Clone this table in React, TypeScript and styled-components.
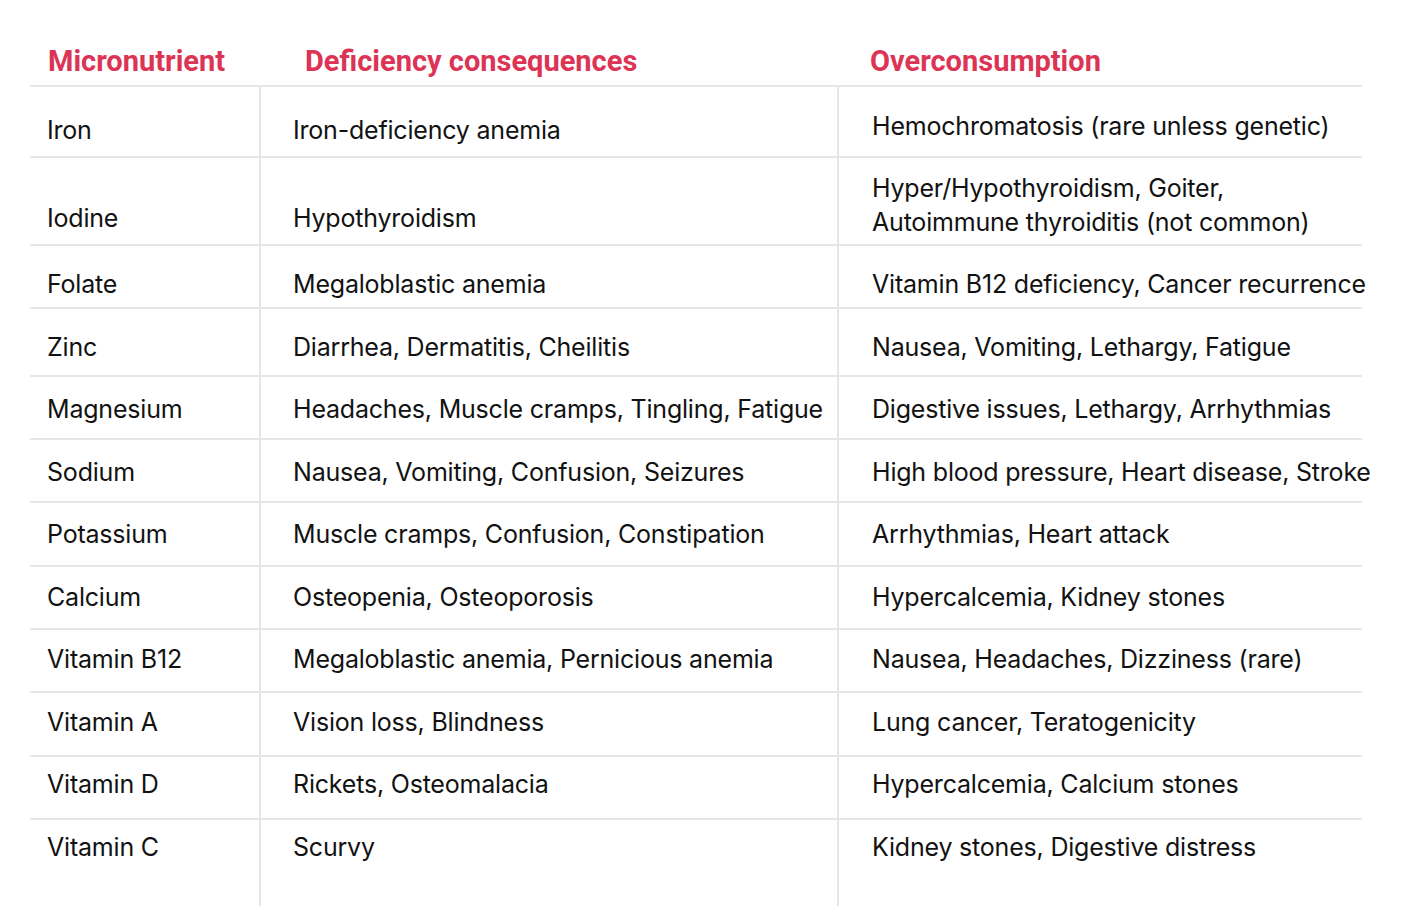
import React from "react";
import styled, { createGlobalStyle } from "styled-components";

const Global = createGlobalStyle`
  html, body { margin: 0; padding: 0; background: #ffffff; }
  body { font-family: "Inter", "Liberation Sans", sans-serif; }
`;

const LINE = "#e6e6e6";

const Page = styled.div`
  padding-left: 30px;
  width: 1332px;
`;

const HeaderRow = styled.div`
  display: grid;
  grid-template-columns: 230px 578px 524px;
  height: 85px;
  border-bottom: 2px solid ${LINE};
  box-sizing: content-box;
`;

const HeadCell = styled.div<{ $pl: number }>`
  padding-left: ${(p) => p.$pl}px;
  padding-top: 44px;
  font-family: "Roboto", "Liberation Sans", sans-serif;
  font-weight: 700;
  font-size: 29px;
  line-height: 34px;
  color: #dc3455;
  white-space: nowrap;
`;

const Row = styled.div<{ $h: number; $last?: boolean }>`
  display: grid;
  grid-template-columns: 230px 578px 524px;
  height: ${(p) => p.$h}px;
  box-sizing: border-box;
  border-bottom: ${(p) => (p.$last ? "none" : `2px solid ${LINE}`)};
`;

const Cell = styled.div<{ $pl: number; $pt: number; $divider?: boolean }>`
  padding-left: ${(p) => p.$pl}px;
  padding-top: ${(p) => p.$pt}px;
  border-left: ${(p) => (p.$divider ? `2px solid ${LINE}` : "none")};
  margin-left: ${(p) => (p.$divider ? "-1px" : "0")};
  font-size: 25px;
  line-height: 34px;
  color: #121212;
  white-space: nowrap;
  letter-spacing: -0.2px;
`;

type R = { name: string; def: string; over: string[]; h: number; t: number; t3: number };

const rows: R[] = [
  { name: "Iron", def: "Iron-deficiency anemia", over: ["Hemochromatosis (rare unless genetic)"], h: 71, t: 44, t3: 40 },
  { name: "Iodine", def: "Hypothyroidism", over: ["Hyper/Hypothyroidism, Goiter,", "Autoimmune thyroiditis (not common)"], h: 88, t: 61, t3: 31 },
  { name: "Folate", def: "Megaloblastic anemia", over: ["Vitamin B12 deficiency, Cancer recurrence"], h: 63, t: 39, t3: 39 },
  { name: "Zinc", def: "Diarrhea, Dermatitis, Cheilitis", over: ["Nausea, Vomiting, Lethargy, Fatigue"], h: 68, t: 39, t3: 39 },
  { name: "Magnesium", def: "Headaches, Muscle cramps, Tingling, Fatigue", over: ["Digestive issues, Lethargy, Arrhythmias"], h: 63, t: 33, t3: 33 },
  { name: "Sodium", def: "Nausea, Vomiting, Confusion, Seizures", over: ["High blood pressure, Heart disease, Stroke"], h: 63, t: 33, t3: 33 },
  { name: "Potassium", def: "Muscle cramps, Confusion, Constipation", over: ["Arrhythmias, Heart attack"], h: 64, t: 32, t3: 32 },
  { name: "Calcium", def: "Osteopenia, Osteoporosis", over: ["Hypercalcemia, Kidney stones"], h: 63, t: 31, t3: 31 },
  { name: "Vitamin B12", def: "Megaloblastic anemia, Pernicious anemia", over: ["Nausea, Headaches, Dizziness (rare)"], h: 63, t: 30, t3: 30 },
  { name: "Vitamin A", def: "Vision loss, Blindness", over: ["Lung cancer, Teratogenicity"], h: 64, t: 30, t3: 30 },
  { name: "Vitamin D", def: "Rickets, Osteomalacia", over: ["Hypercalcemia, Calcium stones"], h: 63, t: 28, t3: 28 },
  { name: "Vitamin C", def: "Scurvy", over: ["Kidney stones, Digestive distress"], h: 86, t: 28, t3: 28 },
];

export default function App() {
  return (
    <Page>
      <Global />
      <HeaderRow>
        <HeadCell $pl={18}>Micronutrient</HeadCell>
        <HeadCell $pl={45}>Deficiency consequences</HeadCell>
        <HeadCell $pl={32}>Overconsumption</HeadCell>
      </HeaderRow>
      {rows.map((r, i) => (
        <Row key={r.name} $h={r.h} $last={i === rows.length - 1}>
          <Cell $pl={17} $pt={r.t - 18}>{r.name}</Cell>
          <Cell $pl={32} $pt={r.t - 18} $divider>{r.def}</Cell>
          <Cell $pl={33} $pt={r.t3 - 18} $divider>
            {r.over.map((l) => (
              <div key={l}>{l}</div>
            ))}
          </Cell>
        </Row>
      ))}
    </Page>
  );
}
